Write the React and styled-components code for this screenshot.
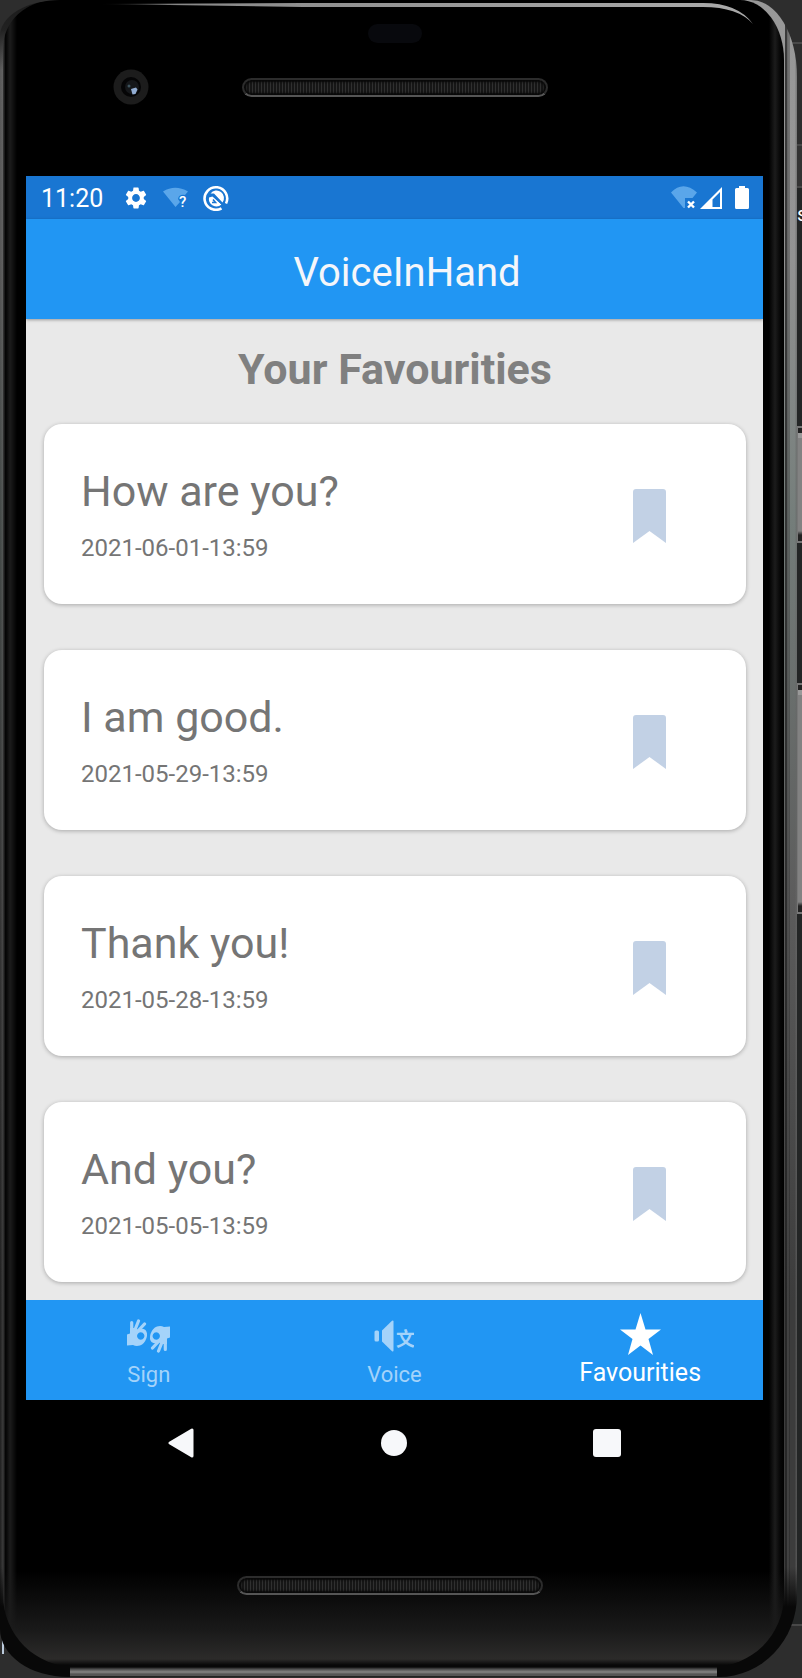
import React from "react";
import styled, { createGlobalStyle, css } from "styled-components";
import { MdSettings } from "react-icons/md";

const GlobalStyle = createGlobalStyle`
  *, *::before, *::after { box-sizing: border-box; }
  body { margin: 0; background: #2d2d2d; font-family: Roboto, "Noto Sans CJK SC", sans-serif; }
  button { font: inherit; color: inherit; background: none; border: 0; padding: 0; cursor: pointer; }
  svg { display: block; }
  h1, h2, h3, p { margin: 0; }
`;

const Desk = styled.div`
  position: relative;
  overflow: hidden;
  min-height: 100vh;
  padding: 0 5px 1px 0;
  background: linear-gradient(
    #2d2d2d 0 42px, #484848 42px 44px, #2d2d2d 44px 144px, #484848 144px 146px,
    #333 146px 186px, #484848 186px 188px, #232525 188px 1624px, #484848 1624px 1626px, #2d2d2d 1626px
  );
`;

const EditorText = styled.span`
  position: absolute;
  left: 797px;
  top: 204px;
  font-size: 20px;
  line-height: 21px;
  color: #fff;
`;

const EditorCaret = styled.span`
  position: absolute;
  left: 2px;
  bottom: 24px;
  width: 2px;
  height: 18px;
  background: #bccbdc;
`;

const SideButton = styled.span`
  position: absolute;
  right: 0;
  top: ${(p) => p.$top}px;
  width: 5px;
  height: ${(p) => p.$height}px;
  border: solid #777;
  border-width: 2px 0 2px 1px;
  background: linear-gradient(#222 0 5px, #999 5px 10px, #828282 10px calc(100% - 10px), #222 calc(100% - 6px));
`;

const Device = styled.div`
  position: relative;
  display: flex;
  flex-direction: column;
  min-height: calc(100vh - 1px);
  padding: 0 13px 10px 3px;
  overflow: hidden;
  border-radius: 60px 46px 78px 68px / 36px 76px 82px 48px;
  background:
    linear-gradient(to top, #222 0 1px, #555 1px 3px, #858585 5px, #484848 8px, transparent 10px) 70px 100% / calc(100% - 150px) 10px no-repeat,
    linear-gradient(to top, #080808 70px, transparent 110px),
    linear-gradient(#1a1a1a, #222 30px, transparent 70px) 0 0 / 70px 70px no-repeat,
    linear-gradient(to right, #0006 0 1px, #3338 2px 12px, transparent 12px calc(100% - 12px), #222c calc(100% - 12px) calc(100% - 10px), #8886 calc(100% - 9px), #1118 calc(100% - 8px), transparent calc(100% - 7px) calc(100% - 2px), #6668 calc(100% - 1px)),
    linear-gradient(#999, #929292 260px, #747d7a 520px, #5c5c5c 900px, #3c3c3c 1300px, #3c3c3c);
`;

const Face = styled.div`
  position: relative;
  flex: 1;
  display: flex;
  flex-direction: column;
  padding: 0 21px 0 23px;
  border-radius: 52px 44px 72px 72px / 48px 60px 72px 72px;
  background:
    linear-gradient(to top, #080808 0 2px, #2c2b2a 8px, #1a1a1a 36px, transparent 96px),
    linear-gradient(to right, #303030 0 1px, #050505 2px 3px, #1c1c1c 7px, #000 14px calc(100% - 15px), #1c1c1c calc(100% - 9px), #070707 calc(100% - 4px), #000),
    #000;
`;

const TopGloss = styled.svg`
  position: absolute;
  right: 0;
  top: 0;
  width: 100%;
  height: 30px;
`;

const TopBezel = styled.div`
  height: 176px;
  padding-top: 24px;
  display: flex;
  flex-direction: column;
  align-items: center;
  gap: 26px;
`;

const Sensor = styled.div`
  width: 54px;
  height: 19px;
  border-radius: 10px;
  background: #08090d;
`;

const BezelRow = styled.div`
  width: 100%;
  display: grid;
  grid-template-columns: 1fr 306px 1fr;
  align-items: center;
`;

const Camera = styled.svg`
  width: 36px;
  height: 36px;
  margin-left: 87px;
`;

const Speaker = styled.div`
  width: 306px;
  height: 19px;
  border: 2px solid #2c2c2c;
  border-bottom-color: #555;
  border-radius: 10px;
  background: repeating-linear-gradient(90deg, #161616 0 2px, #303030 2px 3px);
  box-shadow: inset 0 0 2px 2px #080808;
`;

const Screen = styled.div`
  flex: 1;
  display: flex;
  flex-direction: column;
  background: #e9e9e9;
`;

const StatusBar = styled.div`
  display: flex;
  align-items: center;
  justify-content: space-between;
  height: 43px;
  padding: 0 14px 0 15px;
  background: #1976d2;
  color: #fff;
`;

const StatusGroup = styled.div`
  display: flex;
  align-items: center;
  gap: ${(p) => p.$gap}px;
`;

const Clock = styled.time`
  font-size: 25px;
  line-height: 30px;
  padding-top: 2px;
  margin-right: 7px;
`;

const AppBar = styled.header`
  position: relative;
  display: flex;
  align-items: center;
  justify-content: center;
  height: 100px;
  padding: 8px 0 0 25px;
  background: #2196f3;
  color: #f5f6fa;
  box-shadow: 0 1px 3px rgba(0, 0, 0, 0.35);
`;

const AppTitle = styled.h1`
  font-size: 40px;
  line-height: 48px;
  font-weight: 400;
`;

const Content = styled.main`
  flex: 1;
  padding: 24px 17px 18px 18px;
`;

const SectionTitle = styled.h2`
  margin-bottom: 29px;
  font-size: 43px;
  line-height: 52px;
  font-weight: 700;
  text-align: center;
  color: #808080;
`;

const CardList = styled.div`
  display: flex;
  flex-direction: column;
  gap: 46px;
`;

const Card = styled.article`
  display: flex;
  align-items: center;
  justify-content: space-between;
  height: 180px;
  padding: 0 80px 0 37px;
  border-radius: 18px;
  background: #fff;
  box-shadow: 0 1px 4px rgba(0, 0, 0, 0.28);
  color: #757575;
`;

const Phrase = styled.h3`
  font-size: 43px;
  line-height: 52px;
  font-weight: 400;
`;

const Stamp = styled.p`
  margin-top: 16px;
  font-size: 24px;
  line-height: 30px;
`;

const BookmarkButton = styled.button`
  && { padding-top: 4px; }
`;

const TabBar = styled.nav`
  display: grid;
  grid-template-columns: repeat(3, 1fr);
  height: 100px;
  background: #2196f3;
  color: #fff;
`;

const Tab = styled.button`
  && {
    display: flex;
    flex-direction: column;
    align-items: center;
    padding-top: 12px;
    font-size: 22px;
    line-height: 30px;
    color: #a4d3fa;
    ${(p) => p.$active && css`
      padding-top: 10px;
      font-size: 25px;
      color: #fff;
    `}
  }
`;

const TabIcon = styled.span`
  display: flex;
  align-items: center;
  height: 48px;
`;

const SystemNav = styled.div`
  display: grid;
  grid-template-columns: repeat(3, 1fr);
  place-items: center;
  height: 86px;
  padding: 0 50px 0 48px;
`;

const Chin = styled.div`
  display: flex;
  justify-content: center;
  padding: 90px 9px 72px 0;
`;

const Wifi = ({ mark }) => (
  <svg width="28" height="24" viewBox="0 0 28 24" aria-hidden="true">
    {mark === "?" ? (
      <>
        <path d="M1 5.5Q13-2 26 5.5L23 9Q17 8 16 13L18 16L13.500 21Z" fill="#5aa6ea" />
        <text x="17" y="20.500" fontSize="15" fontWeight="500" fill="#fff">?</text>
      </>
    ) : (
      <>
        <path d="M1 6.500Q13-6 27 6.500L22.500 12H15V22H13.500Z" fill="#5aa6ea" />
        <path d="M18 15.500l6 6m0-6l-6 6" stroke="#fff" strokeWidth="2.400" />
      </>
    )}
  </svg>
);

const DebugIcon = () => (
  <svg width="26" height="26" viewBox="0 0 26 26" fill="none" aria-hidden="true">
    <path d="M18.500 23.300A11.300 11.300 0 1 1 23 18.500" stroke="#fff" strokeWidth="2.600" />
    <path d="M7.500 8.500A7.200 7.200 0 0 1 19.500 17.500L11 8.500Z" fill="#fff" />
    <path d="M6 12.500L9.500 11.500L18.500 19.500A7.600 7.600 0 0 1 6 12.500Z" fill="#fff" />
    <path d="M10 14.500L12.500 17.500H9M9 9.500L20 20" stroke="#1976d2" strokeWidth="1.600" />
  </svg>
);

const Signal = () => (
  <svg width="22" height="22" viewBox="0 0 22 22" aria-hidden="true">
    <path fillRule="evenodd" fill="#fff" d="M0 22L22 0V22ZM12.500 12.500V20H20V5Z" />
  </svg>
);

const Battery = () => (
  <svg width="14" height="23" viewBox="0 0 14 23" aria-hidden="true">
    <path fill="#fff" d="M4 0h6v2h2.500q1.500 0 1.500 1.500v18q0 1.500-1.500 1.500h-11Q0 23 0 21.500v-18Q0 2 1.500 2H4Z" />
  </svg>
);

const BookmarkIcon = () => (
  <svg width="33" height="54" viewBox="0 0 33 54" aria-hidden="true">
    <path fill="#c2d1e5" d="M0 3Q0 0 3 0H30Q33 0 33 3V54L16.500 42L0 54Z" />
  </svg>
);

const Hand = (props) => (
  <g {...props}>
    <path
      fillRule="evenodd"
      fill="currentColor"
      d="M0 15.500L3 14.500V9H9L11 11Q15 8.500 18.500 11Q21 14 19.500 19Q17.500 25 13 26.500Q9 27.500 6 26L0 26.500ZM13.700 13.300a3.700 3.700 0 1 0 0.100 0Z"
    />
    <path
      d="M4.700 12V3.500M7.500 12L11.500 2M10.500 12.500L17.500 5"
      fill="none"
      stroke="currentColor"
      strokeWidth="3.200"
      strokeLinecap="round"
    />
  </g>
);

const SignIcon = () => (
  <svg width="43" height="34" viewBox="0 0 43 34" aria-hidden="true">
    <Hand />
    <Hand transform="rotate(180 21.500 17)" />
  </svg>
);

const VoiceIcon = () => (
  <svg width="40" height="32" viewBox="0 0 40 32" fill="currentColor" aria-hidden="true">
    <rect x="0.500" y="10.500" width="4.500" height="11" rx="1.500" />
    <path d="M8 10.500L18 0.800Q19.500 0 19.500 1.500V30.500Q19.500 32 18 31.200L8 21.500Z" />
    <text x="22" y="26" fontSize="19" fontWeight="700" fontFamily='"Noto Sans CJK SC", sans-serif'>文</text>
  </svg>
);

const StarIcon = () => (
  <svg width="41" height="42" viewBox="0 0 41 42" aria-hidden="true">
    <path fill="currentColor" d="M20.500 0L25.500 16.500H41L28.500 26L33 42L20.500 32.500L8 42L12.500 26L0 16.500H15.500Z" />
  </svg>
);

const favourites = [
  { text: "How are you?", date: "2021-06-01-13:59" },
  { text: "I am good.", date: "2021-05-29-13:59" },
  { text: "Thank you!", date: "2021-05-28-13:59" },
  { text: "And you?", date: "2021-05-05-13:59" },
];

export default function App() {
  return (
    <>
      <GlobalStyle />
      <Desk>
        <EditorText>s</EditorText>
        <EditorCaret />
        <SideButton $top={426} $height={117} />
        <SideButton $top={683} $height={231} />
        <Device>
          <Face>
            <TopGloss viewBox="0 0 781 30" preserveAspectRatio="xMaxYMin slice" aria-hidden="true">
              <defs>
                <linearGradient id="gloss">
                  <stop offset="0" stopColor="#000" />
                  <stop offset="0.12" stopColor="#888" />
                  <stop offset="1" stopColor="#aaa" />
                </linearGradient>
              </defs>
              <path d="M96 4L300 3H700Q735 3 750 24Q735 7 700 7H300Z" fill="url(#gloss)" />
            </TopGloss>
            <TopBezel>
              <Sensor />
              <BezelRow>
                <Camera viewBox="0 0 36 36" aria-hidden="true">
                  <circle cx="18" cy="18" r="17.500" fill="#1c1c1c" />
                  <circle cx="18" cy="18" r="10" fill="#050506" />
                  <circle cx="19" cy="18" r="7" fill="#15171a" />
                  <circle cx="16" cy="17" r="1.500" fill="#3f5560" />
                  <path d="M18 20l5-1.500 1.500 2-2 4.500-3 .5z" fill="#91acd2" />
                </Camera>
                <Speaker />
              </BezelRow>
            </TopBezel>
            <Screen>
              <StatusBar>
                <StatusGroup $gap={13}>
                  <Clock>11:20</Clock>
                  <MdSettings size={26} />
                  <Wifi mark="?" />
                  <DebugIcon />
                </StatusGroup>
                <StatusGroup $gap={2}>
                  <Wifi mark="x" />
                  <StatusGroup $gap={13}>
                    <Signal />
                    <Battery />
                  </StatusGroup>
                </StatusGroup>
              </StatusBar>
              <AppBar>
                <AppTitle>VoiceInHand</AppTitle>
              </AppBar>
              <Content>
                <SectionTitle>Your Favourities</SectionTitle>
                <CardList>
                  {favourites.map((f) => (
                    <Card key={f.date}>
                      <div>
                        <Phrase>{f.text}</Phrase>
                        <Stamp>{f.date}</Stamp>
                      </div>
                      <BookmarkButton type="button" aria-label={`Remove ${f.text}`}>
                        <BookmarkIcon />
                      </BookmarkButton>
                    </Card>
                  ))}
                </CardList>
              </Content>
              <TabBar>
                <Tab type="button">
                  <TabIcon><SignIcon /></TabIcon>
                  Sign
                </Tab>
                <Tab type="button">
                  <TabIcon><VoiceIcon /></TabIcon>
                  Voice
                </Tab>
                <Tab type="button" $active aria-current="page">
                  <TabIcon><StarIcon /></TabIcon>
                  Favourities
                </Tab>
              </TabBar>
            </Screen>
            <SystemNav>
              <button type="button" aria-label="Back">
                <svg width="26" height="30" viewBox="0 0 26 30">
                  <path d="M2 15L24 2V28Z" fill="#f7f8fa" stroke="#f7f8fa" strokeWidth="3" strokeLinejoin="round" />
                </svg>
              </button>
              <button type="button" aria-label="Home">
                <svg width="26" height="26" viewBox="0 0 26 26">
                  <circle cx="13" cy="13" r="13" fill="#f7f8fa" />
                </svg>
              </button>
              <button type="button" aria-label="Overview">
                <svg width="28" height="28" viewBox="0 0 28 28">
                  <rect width="28" height="28" rx="3" fill="#f7f8fa" />
                </svg>
              </button>
            </SystemNav>
            <Chin>
              <Speaker />
            </Chin>
          </Face>
        </Device>
      </Desk>
    </>
  );
}
